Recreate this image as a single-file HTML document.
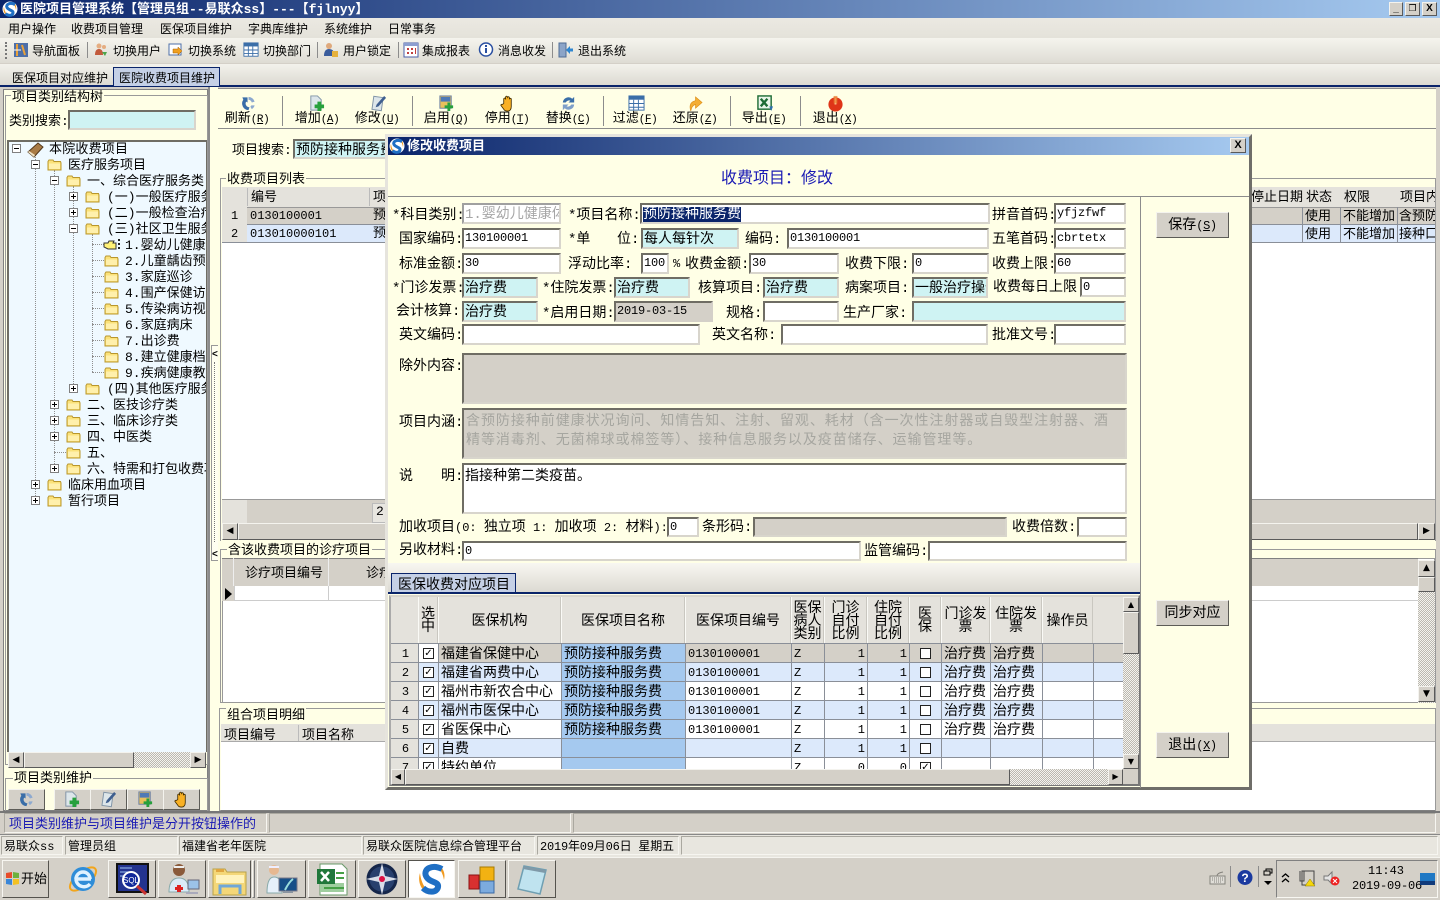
<!DOCTYPE html>
<html lang="zh"><head><meta charset="utf-8"><title>医院项目管理系统</title>
<style>
html,body{margin:0;padding:0;width:1440px;height:900px;overflow:hidden;background:#d4d0c8}
body{font-family:"Liberation Mono","WenQuanYi Zen Hei","Noto Sans CJK SC",monospace;font-size:12px;color:#000;position:relative}
div,span,i,svg{position:absolute;box-sizing:border-box}
b{font-weight:normal}
.a{white-space:nowrap;line-height:16px;margin-top:2px}
.a.m{margin-top:3px}
.tr .a{margin-top:4px}
.a b{font-size:12px}
.b{background:#ffffe6}
.m{font-size:14px}
.s13{font-size:13px}
.i{border:2px solid;border-color:#6f6d64 #d8d5cc #d8d5cc #6f6d64;background:#fff;white-space:nowrap;overflow:hidden;font-size:12px;line-height:17px;padding-left:1px;letter-spacing:-.2px}
.i.m{font-size:14px;line-height:20px;letter-spacing:0}
.c{background:#cff3f3;font-size:14px;line-height:20px;letter-spacing:0}
.g{background:#d4d0c8}
.gb{border:1px solid #999;background:transparent}
.btn{background:#d4d0c8;border:1px solid;border-color:#f4f3ee #5d5c57 #5d5c57 #f4f3ee;text-align:center;font-size:14px}
.btn b{font-size:12px;letter-spacing:-.4px}
.tb b{font-size:11px;letter-spacing:-.4px}
.sb{background:#d4d0c8;border:1px solid;border-color:#f4f3ee #5a5a5a #5a5a5a #f4f3ee}
.ht{background:repeating-conic-gradient(#bbb8b0 0 25%,#f4f3ee 0 50%) 0 0/2px 2px}
.l{background:#8c8c8c}
.tg{width:9px;height:9px;border:1px solid #808080;background:#fff}
.tg::before{content:"";position:absolute;left:1px;top:3px;width:5px;height:1px;background:#000}
.tg.p::after{content:"";position:absolute;left:3px;top:1px;width:1px;height:5px;background:#000}
.dv{border-left:1px dotted #8f8f8f}
.dh{border-top:1px dotted #8f8f8f;height:1px}
.tb{font-size:13px;text-align:center;white-space:nowrap;line-height:16px;width:60px;margin-top:3px}
table{position:absolute;border-collapse:collapse;table-layout:fixed;font-size:14px}
td{border:1px solid #8a8f98;height:19px;padding:4px 0 0 2px;white-space:nowrap;overflow:hidden;line-height:14px;box-sizing:border-box}
td.mo{font-size:12px;padding-top:2px;line-height:15px}
td.r{text-align:right;padding-right:2px;font-size:12px;padding-top:2px;line-height:15px}
td.n{background:#e4e2dc;text-align:center;font-size:12px;padding-top:2px;line-height:15px}
td.nm{background:#a5c9ef}
.rb td{background:#dce9fb}.rb td.n{background:#e4e2dc}.rb td.nm{background:#a5c9ef}
.rg td{background:#d4d0c8}.rg td.n{background:#e4e2dc}.rg td.nm{background:#a5c9ef}.rg td.ck{background:#fff}
td.cc{padding:0}
.cb{position:static;display:block;margin:1px auto 0;width:11px;height:11px;border:1px solid #222;background:#fff;font:bold 10px/9px "DejaVu Sans";text-align:center;overflow:hidden}
.h{background:#e4e2dc;border-right:1px solid #c9c7c0;border-left:1px solid #fafaf6;text-align:center;height:46px;top:597px;line-height:13px;font-size:14px;display:flex;align-items:center;justify-content:center;padding-top:4px}
.st{border:1px solid;border-color:#aaa8a0 #f6f5f0 #f6f5f0 #aaa8a0;height:19px;top:836px;line-height:21px;padding-left:2px;white-space:nowrap;overflow:hidden}
.tk{top:860px;height:38px;background:#d4d0c8;border:1px solid;border-color:#f7f6f1 #55534e #55534e #f7f6f1}
</style></head><body>
<svg width="0" height="0" style="left:0;top:0"><defs>
<symbol id="fo" viewBox="0 0 15 13"><path d="M1 3.500 2 2h4l1 1.500h6.500L14 5v7H1z" fill="#fbe27a" stroke="#b8962d"/><path d="M2 5.500h11v5.500H2z" fill="#fff0ac"/></symbol>
<symbol id="rf" viewBox="0 0 18 18"><path d="M9 2A7 7 0 0 1 15.500 7l-3 1A4 4 0 0 0 9 5z" fill="#8da9cf"/><path d="M3.500 5A7 7 0 0 0 9 16l1-3a4 4 0 0 1-3.500-6L8 8V2.500H2.500z" fill="#3a6ea8"/><path d="M15.500 11a7 7 0 0 1-3 4l-1.500-2.500 1-1.500z" fill="#8da9cf"/></symbol>
<symbol id="ad" viewBox="0 0 18 18"><path d="M3 1h7l4 4v11H3z" fill="#dde6ea" stroke="#7f93a6"/><path d="M10 7h4v3h3v4h-3v3h-4v-3H7v-4h3z" fill="#27a03c"/></symbol>
<symbol id="ed" viewBox="0 0 18 18"><path d="M3 2h10v14H3z" fill="#dde6ea" stroke="#7f93a6" transform="rotate(8 8 9)"/><path d="M15 1l2 2-8 9-3 1 1-3z" fill="#3f5f8f"/></symbol>
<symbol id="en" viewBox="0 0 18 18"><rect x="2" y="1" width="12" height="13" fill="#e8c05c" stroke="#6b7ea0"/><rect x="3" y="2" width="10" height="5" fill="#4f79b5"/><path d="M10 8h3v3h3v3h-3v3h-3v-3H7v-3h3z" fill="#27a03c"/></symbol>
<symbol id="hd" viewBox="0 0 18 18"><path d="M5 9V4q1-1.500 2 0V2q1-1.500 2 0v.500q1-1.500 2 0V4q1-1 2 0v8q0 5-4 5-3 0-4-2L2 11q0-1.500 1.500-1z" fill="#f8b024" stroke="#402c00" stroke-width=".9"/></symbol>
<symbol id="sw" viewBox="0 0 18 18"><path d="M3 8A6 6 0 0 1 13 4l2-2v6H9l2-2A4 4 0 0 0 6 8z" fill="#3a6ea8"/><path d="M15 10A6 6 0 0 1 5 14l-2 2v-6h6l-2 2a4 4 0 0 0 5-2z" fill="#7e9fc9"/></symbol>
<symbol id="fl" viewBox="0 0 18 18"><rect x="1" y="1" width="16" height="15" fill="#fff" stroke="#3b6ea8"/><path d="M1 1h16v4H1z" fill="#3b6ea8"/><path d="M6 5v11M11 5v11M1 9h16M1 13h16" stroke="#3b6ea8"/></symbol>
<symbol id="un" viewBox="0 0 18 18"><path d="M4 17Q1 8 9 6V2l7 6-7 6v-4q-4 1-5 7z" fill="#f4ae33" stroke="#d98a12" stroke-width=".6"/></symbol>
<symbol id="xl" viewBox="0 0 18 18"><rect x="1" y="1" width="14" height="14" fill="#eaf5ea" stroke="#1d6b35" stroke-width="1.500"/><path d="M4 4l7 8M11 4l-7 8" stroke="#1d6b35" stroke-width="2.500"/><path d="M13 12h4l-2 5z" fill="#2d6fb0"/></symbol>
<symbol id="pw" viewBox="0 0 18 18"><circle cx="9" cy="10" r="7.500" fill="#df3518"/><path d="M9 3v7" stroke="#ffd4a0" stroke-width="2"/><rect x="7" y="1" width="4" height="8" fill="#e8792a" opacity=".7"/></symbol>
<symbol id="lg" viewBox="0 0 16 16"><circle cx="8" cy="8" r="7.500" fill="#fff"/><path d="M2 6C.5 10 3 15 8 15 5 14 2.500 11 2 6z" fill="#f19a1f"/><path d="M10 1c3 1 5 4 4 8-.5-3-2-6-4-8z" fill="#f19a1f"/><path d="M13 3.500C8 1 3.500 3.500 5 6.500S11.500 9 11 12 6 15 3.500 12.500" fill="none" stroke="#1f6fc4" stroke-width="3"/></symbol>
</defs></svg>

<!-- window title -->
<div style="left:0;top:0;width:1440px;height:18px;background:linear-gradient(90deg,#0a246a,#a6caf0)"></div>
<svg style="left:2px;top:1px" width="16" height="16"><use href="#lg"/></svg>
<div class="a" style="left:20px;top:-1px;margin-top:2px;color:#fff;font-weight:bold;font-size:13px;line-height:18px;padding-top:0">医院项目管理系统【管理员组--易联众ss】---【fjlnyy】</div>
<div class="sb" style="left:1389px;top:2px;width:14px;height:14px;font:bold 10px/12px 'Liberation Sans';text-align:center">_</div>
<div class="sb" style="left:1405px;top:2px;width:15px;height:14px;font:bold 9px/12px 'DejaVu Sans';text-align:center">&#10064;</div>
<div class="sb" style="left:1422px;top:2px;width:15px;height:14px;font:bold 10px/12px 'Liberation Sans';text-align:center">X</div>

<!-- menu -->
<div style="left:0;top:18px;width:1440px;height:20px;background:linear-gradient(#ebe9e2,#e4e2da)"></div>
<div class="a" style="left:8px;top:20px">用户操作</div>
<div class="a" style="left:71px;top:20px">收费项目管理</div>
<div class="a" style="left:160px;top:20px">医保项目维护</div>
<div class="a" style="left:248px;top:20px">字典库维护</div>
<div class="a" style="left:324px;top:20px">系统维护</div>
<div class="a" style="left:388px;top:20px">日常事务</div>

<!-- toolbar -->
<div style="left:0;top:38px;width:1440px;height:25px;background:linear-gradient(#f5f4ee,#dedcd4)"></div>
<div style="left:5px;top:42px;width:2px;height:17px;border-left:2px dotted #777"></div>
<svg style="left:13px;top:42px" width="16" height="16"><rect x="1" y="1" width="14" height="14" fill="#4d6fa8"/><path d="M4 2v12M9 3l3 10" stroke="#e9a13b" stroke-width="2"/><path d="M1 8h7" stroke="#fff"/></svg>
<div class="a" style="left:32px;top:42px">导航面板</div>
<div class="l" style="left:87px;top:42px;width:1px;height:16px"></div>
<svg style="left:93px;top:42px" width="16" height="16"><circle cx="6" cy="4" r="2.500" fill="#e5ad81"/><path d="M2 13q0-6 4-6t4 6z" fill="#c25a3c"/><circle cx="11" cy="5" r="2" fill="#e5ad81"/><path d="M9 10h5l-2 4z" fill="#4ca64c"/></svg>
<div class="a" style="left:113px;top:42px">切换用户</div>
<svg style="left:168px;top:42px" width="16" height="16"><rect x="1" y="2" width="12" height="11" fill="#fff" stroke="#4d6fa8"/><path d="M5 7h5v-2l4 4-4 4v-2H5z" fill="#f0a020" stroke="#a85f00" stroke-width=".5"/></svg>
<div class="a" style="left:188px;top:42px">切换系统</div>
<svg style="left:243px;top:42px" width="16" height="16"><use href="#fl"/></svg>
<div class="a" style="left:263px;top:42px">切换部门</div>
<div class="l" style="left:317px;top:42px;width:1px;height:16px"></div>
<svg style="left:323px;top:42px" width="16" height="16"><circle cx="6" cy="4" r="3" fill="#dfa97c"/><path d="M1 14q0-7 5-7t5 5v2z" fill="#3a5c9c"/><rect x="9" y="9" width="6" height="6" fill="#e6b13c"/></svg>
<div class="a" style="left:343px;top:42px">用户锁定</div>
<div class="l" style="left:398px;top:42px;width:1px;height:16px"></div>
<svg style="left:403px;top:42px" width="16" height="16"><rect x="1" y="1" width="14" height="14" fill="#fff" stroke="#4a5fa8"/><path d="M1 1h14v3H1z" fill="#8c9ed0"/><path d="M4 6h2v2H4zM8 6h2v2H8zM4 10h2v2H4zM8 10h2v2H8zM12 6h1v6h-1z" fill="#c04040"/></svg>
<div class="a" style="left:422px;top:42px">集成报表</div>
<svg style="left:478px;top:42px" width="16" height="17"><circle cx="8" cy="7.500" r="6.500" fill="#fff" stroke="#2a4fa0" stroke-width="1.500"/><path d="M7 3h2v2H7zM7 6h2v5H7z" fill="#2a4fa0"/></svg>
<div class="a" style="left:498px;top:42px">消息收发</div>
<div class="l" style="left:552px;top:42px;width:1px;height:16px"></div>
<svg style="left:558px;top:42px" width="16" height="16"><rect x="1" y="1" width="7" height="14" fill="#8ba4c8" stroke="#4f6c95"/><path d="M8 8l4-4v2.500h3v3h-3V12z" fill="#2e86d0"/></svg>
<div class="a" style="left:578px;top:42px">退出系统</div>

<!-- tabs -->
<div style="left:0;top:64px;width:1440px;height:21px;background:linear-gradient(#f3f2ec,#dcdad2)"></div>
<div style="left:0;top:85px;width:1440px;height:2px;background:#0a246a"></div>
<div class="a" style="left:12px;top:69px">医保项目对应维护</div>
<div style="left:113px;top:67px;width:107px;height:19px;background:#c5d0e6;border:1px solid #0a246a;border-bottom:none"></div>
<div class="a" style="left:119px;top:69px">医院收费项目维护</div>

<!-- left panel -->
<div style="left:0;top:87px;width:5px;height:727px;background:#d4d0c8"></div>
<div class="b" style="left:3px;top:89px;width:205px;height:722px;border:1px solid #808080"></div>
<div class="gb" style="left:5px;top:95px;width:203px;height:670px"></div>
<div class="a b s13" style="left:11px;top:88px;padding:0 1px">项目类别结构树</div>
<div class="a s13" style="left:9px;top:112px">类别搜索:</div>
<div class="i c" style="left:68px;top:110px;width:128px;height:20px"></div>
<div class="tr" style="left:7px;top:140px;width:200px;height:612px;background:#eff9ff;border:1px solid #6f6d64;border-width:2px 1px 0 2px;overflow:hidden">
<div style="left:-9px;top:-142px;width:1440px;height:900px;font-size:13px">
<div class="dv" style="left:35px;top:152px;height:348px"></div>
<div class="dv" style="left:54px;top:170px;height:300px"></div>
<div class="dv" style="left:73px;top:186px;height:204px"></div>
<div class="dv" style="left:92px;top:234px;height:138px"></div>
<i class="tg" style="left:12px;top:144px"></i><svg style="left:27px;top:141px" width="18" height="17" viewBox="0 0 18 17"><path d="M1 11 11 2l5 4-9 10z" fill="#a97b45" stroke="#53391c"/><path d="M1 11l6 5 1-2-6-4z" fill="#efe3c7"/></svg><div class="a" style="left:49px;top:138px;letter-spacing:.2px">本院收费项目</div>
<i class="tg" style="left:31px;top:160px"></i><svg style="left:47px;top:158px" width="15" height="13"><use href="#fo"/></svg><div class="a" style="left:68px;top:154px">医疗服务项目</div>
<i class="tg" style="left:50px;top:176px"></i><svg style="left:66px;top:174px" width="15" height="13"><use href="#fo"/></svg><div class="a" style="left:87px;top:170px">一、综合医疗服务类</div>
<i class="tg p" style="left:69px;top:192px"></i><svg style="left:85px;top:190px" width="15" height="13"><use href="#fo"/></svg><div class="a" style="left:107px;top:186px">(一)一般医疗服务项目</div>
<i class="tg p" style="left:69px;top:208px"></i><svg style="left:85px;top:206px" width="15" height="13"><use href="#fo"/></svg><div class="a" style="left:107px;top:202px">(二)一般检查治疗项目</div>
<i class="tg" style="left:69px;top:224px"></i><svg style="left:85px;top:222px" width="15" height="13"><use href="#fo"/></svg><div class="a" style="left:107px;top:218px">(三)社区卫生服务项目</div>
<div class="dh" style="left:92px;top:244px;width:12px"></div><svg style="left:103px;top:238px" width="17" height="14"><path d="M1 5h4l1-2h5l-1 2h3v6H5L1 9z" fill="#fff176" stroke="#333"/><path d="M15 1h2v2h-2zM15 5h2v2h-2zM15 9h2v2h-2z" fill="#222"/></svg><div class="a" style="left:125px;top:234px">1.婴幼儿健康体检</div>
<div class="dh" style="left:92px;top:260px;width:12px"></div><svg style="left:104px;top:254px" width="15" height="13"><use href="#fo"/></svg><div class="a" style="left:125px;top:250px">2.儿童龋齿预防</div>
<div class="dh" style="left:92px;top:276px;width:12px"></div><svg style="left:104px;top:270px" width="15" height="13"><use href="#fo"/></svg><div class="a" style="left:125px;top:266px">3.家庭巡诊</div>
<div class="dh" style="left:92px;top:292px;width:12px"></div><svg style="left:104px;top:286px" width="15" height="13"><use href="#fo"/></svg><div class="a" style="left:125px;top:282px">4.围产保健访视</div>
<div class="dh" style="left:92px;top:308px;width:12px"></div><svg style="left:104px;top:302px" width="15" height="13"><use href="#fo"/></svg><div class="a" style="left:125px;top:298px">5.传染病访视</div>
<div class="dh" style="left:92px;top:324px;width:12px"></div><svg style="left:104px;top:318px" width="15" height="13"><use href="#fo"/></svg><div class="a" style="left:125px;top:314px">6.家庭病床</div>
<div class="dh" style="left:92px;top:340px;width:12px"></div><svg style="left:104px;top:334px" width="15" height="13"><use href="#fo"/></svg><div class="a" style="left:125px;top:330px">7.出诊费</div>
<div class="dh" style="left:92px;top:356px;width:12px"></div><svg style="left:104px;top:350px" width="15" height="13"><use href="#fo"/></svg><div class="a" style="left:125px;top:346px">8.建立健康档案</div>
<div class="dh" style="left:92px;top:372px;width:12px"></div><svg style="left:104px;top:366px" width="15" height="13"><use href="#fo"/></svg><div class="a" style="left:125px;top:362px">9.疾病健康教育</div>
<i class="tg p" style="left:69px;top:384px"></i><svg style="left:85px;top:382px" width="15" height="13"><use href="#fo"/></svg><div class="a" style="left:107px;top:378px">(四)其他医疗服务项目</div>
<i class="tg p" style="left:50px;top:400px"></i><svg style="left:66px;top:398px" width="15" height="13"><use href="#fo"/></svg><div class="a" style="left:87px;top:394px">二、医技诊疗类</div>
<i class="tg p" style="left:50px;top:416px"></i><svg style="left:66px;top:414px" width="15" height="13"><use href="#fo"/></svg><div class="a" style="left:87px;top:410px">三、临床诊疗类</div>
<i class="tg p" style="left:50px;top:432px"></i><svg style="left:66px;top:430px" width="15" height="13"><use href="#fo"/></svg><div class="a" style="left:87px;top:426px">四、中医类</div>
<div class="dh" style="left:54px;top:452px;width:12px"></div><svg style="left:66px;top:446px" width="15" height="13"><use href="#fo"/></svg><div class="a" style="left:87px;top:442px">五、</div>
<i class="tg p" style="left:50px;top:464px"></i><svg style="left:66px;top:462px" width="15" height="13"><use href="#fo"/></svg><div class="a" style="left:87px;top:458px">六、特需和打包收费项目</div>
<i class="tg p" style="left:31px;top:480px"></i><svg style="left:47px;top:478px" width="15" height="13"><use href="#fo"/></svg><div class="a" style="left:68px;top:474px">临床用血项目</div>
<i class="tg p" style="left:31px;top:496px"></i><svg style="left:47px;top:494px" width="15" height="13"><use href="#fo"/></svg><div class="a" style="left:68px;top:490px">暂行项目</div>
</div></div>
<div class="ht" style="left:8px;top:752px;width:198px;height:16px"></div>
<div class="sb" style="left:8px;top:752px;width:16px;height:16px;font:9px/14px 'DejaVu Sans';text-align:center">&#9664;</div>
<div class="sb" style="left:24px;top:752px;width:110px;height:16px"></div>
<div class="sb" style="left:190px;top:752px;width:16px;height:16px;font:9px/14px 'DejaVu Sans';text-align:center">&#9654;</div>
<div class="gb" style="left:5px;top:778px;width:203px;height:34px;border-bottom:none"></div>
<div class="a b s13" style="left:13px;top:769px;padding:0 1px">项目类别维护</div>
<div class="btn" style="left:8px;top:789px;width:37px;height:21px"></div><svg style="left:18px;top:791px" width="17" height="17"><use href="#rf"/></svg>
<div class="btn" style="left:54px;top:789px;width:37px;height:21px"></div><svg style="left:63px;top:791px" width="17" height="17"><use href="#ad"/></svg>
<div class="btn" style="left:90px;top:789px;width:37px;height:21px"></div><svg style="left:100px;top:791px" width="17" height="17"><use href="#ed"/></svg>
<div class="btn" style="left:127px;top:789px;width:37px;height:21px"></div><svg style="left:137px;top:791px" width="17" height="17"><use href="#en"/></svg>
<div class="btn" style="left:163px;top:789px;width:37px;height:21px"></div><svg style="left:173px;top:791px" width="17" height="17"><use href="#hd"/></svg>

<!-- splitter -->
<div style="left:208px;top:87px;width:2px;height:727px;background:#8c8c8c"></div>
<div class="b" style="left:210px;top:87px;width:8px;height:727px"></div>
<div style="left:211px;top:345px;width:8px;height:216px;border:1px solid #999;background:#fffff0"></div>
<div style="left:214px;top:362px;width:1px;height:180px;border-left:1px dotted #777"></div>
<div class="a" style="left:212px;top:347px;font:bold 10px/12px 'Liberation Sans'">&lt;</div>
<div class="a" style="left:212px;top:547px;font:bold 10px/12px 'Liberation Sans'">&lt;</div>

<!-- right panel bg -->
<div class="b" style="left:218px;top:89px;width:1218px;height:724px"></div>
<div style="left:1436px;top:87px;width:4px;height:727px;background:#d4d0c8"></div>
<div class="l" style="left:218px;top:88px;width:1218px;height:1px"></div>
<div class="l" style="left:218px;top:128px;width:1218px;height:1px"></div>

<!-- action toolbar -->
<svg style="left:240px;top:95px" width="17" height="17"><use href="#rf"/></svg><div class="tb" style="left:217px;top:108px">刷新<b>(<u>R</u>)</b></div>
<div class="l" style="left:282px;top:96px;width:1px;height:30px"></div>
<svg style="left:308px;top:95px" width="17" height="17"><use href="#ad"/></svg><div class="tb" style="left:287px;top:108px">增加<b>(<u>A</u>)</b></div>
<svg style="left:370px;top:95px" width="17" height="17"><use href="#ed"/></svg><div class="tb" style="left:347px;top:108px">修改<b>(<u>U</u>)</b></div>
<div class="l" style="left:412px;top:96px;width:1px;height:30px"></div>
<svg style="left:438px;top:95px" width="17" height="17"><use href="#en"/></svg><div class="tb" style="left:416px;top:108px">启用<b>(<u>Q</u>)</b></div>
<svg style="left:499px;top:95px" width="17" height="17"><use href="#hd"/></svg><div class="tb" style="left:477px;top:108px">停用<b>(<u>T</u>)</b></div>
<svg style="left:560px;top:95px" width="17" height="17"><use href="#sw"/></svg><div class="tb" style="left:538px;top:108px">替换<b>(<u>C</u>)</b></div>
<div class="l" style="left:603px;top:96px;width:1px;height:30px"></div>
<svg style="left:628px;top:95px" width="17" height="17"><use href="#fl"/></svg><div class="tb" style="left:605px;top:108px">过滤<b>(<u>F</u>)</b></div>
<svg style="left:687px;top:95px" width="17" height="17"><use href="#un"/></svg><div class="tb" style="left:665px;top:108px">还原<b>(<u>Z</u>)</b></div>
<div class="l" style="left:730px;top:96px;width:1px;height:30px"></div>
<svg style="left:757px;top:95px" width="17" height="17"><use href="#xl"/></svg><div class="tb" style="left:734px;top:108px">导出<b>(<u>E</u>)</b></div>
<div class="l" style="left:800px;top:96px;width:1px;height:30px"></div>
<svg style="left:827px;top:95px" width="17" height="17"><use href="#pw"/></svg><div class="tb" style="left:805px;top:108px">退出<b>(<u>X</u>)</b></div>

<div class="a s13" style="left:232px;top:141px">项目搜索:</div>
<div class="i c" style="left:293px;top:139px;width:100px;height:20px">预防接种服务费</div>

<!-- 收费项目列表 -->
<div class="gb" style="left:220px;top:178px;width:1216px;height:363px;border-bottom:none"></div>
<div class="a b s13" style="left:226px;top:170px;padding:0 1px">收费项目列表</div>
<div style="left:222px;top:187px;width:1213px;height:353px;background:#fff"></div>
<div style="left:222px;top:187px;width:1213px;height:20px;background:#e4e2dc"></div>
<div class="a s13" style="left:251px;top:188px">编号</div><div class="a s13" style="left:373px;top:188px">项</div>
<div style="left:247px;top:188px;width:1px;height:18px;background:#bbb"></div>
<div style="left:369px;top:188px;width:1px;height:18px;background:#bbb"></div>
<div style="left:222px;top:207px;width:1213px;height:18px;background:#d4d0c8;border-bottom:1px solid #8a8f98;border-top:1px solid #999"></div>
<div style="left:222px;top:225px;width:1213px;height:18px;background:#dce9fb;border-bottom:1px solid #8a8f98"></div>
<div style="left:222px;top:207px;width:25px;height:36px;background:#e4e2dc;border-bottom:1px solid #8a8f98"></div>
<div class="a" style="left:231px;top:206px">1</div><div class="a" style="left:231px;top:224px">2</div>
<div class="a" style="left:250px;top:206px">0130100001</div><div class="a" style="left:250px;top:224px">013010000101</div>
<div class="a s13" style="left:373px;top:206px">预</div><div class="a s13" style="left:373px;top:224px">预</div>
<div class="a s13" style="left:1251px;top:188px">停止日期</div><div class="a s13" style="left:1306px;top:188px">状态</div><div class="a s13" style="left:1344px;top:188px">权限</div><div class="a s13" style="left:1400px;top:188px;width:35px;overflow:hidden">项目内容</div>
<div class="a s13" style="left:1305px;top:207px">使用</div><div class="a s13" style="left:1343px;top:207px">不能增加</div><div class="a s13" style="left:1399px;top:207px;width:36px;overflow:hidden">含预防接种</div>
<div class="a s13" style="left:1305px;top:225px">使用</div><div class="a s13" style="left:1343px;top:225px">不能增加</div><div class="a s13" style="left:1399px;top:225px;width:36px;overflow:hidden">接种口服</div>
<div style="left:1302px;top:207px;width:1px;height:36px;background:#8a8f98"></div><div style="left:1340px;top:207px;width:1px;height:36px;background:#8a8f98"></div><div style="left:1397px;top:207px;width:1px;height:36px;background:#8a8f98"></div>
<div style="left:222px;top:499px;width:1213px;height:24px;background:#d4d0c8;border-top:1px solid #999"></div>
<div style="left:222px;top:500px;width:25px;height:23px;background:#e4e2dc"></div>
<div class="a" style="left:372px;top:501px;width:15px;height:20px;background:#e8e6e0;border:1px solid #bbb;font-size:13px;padding-left:3px">2</div>
<div class="ht" style="left:222px;top:523px;width:1213px;height:17px"></div>
<div class="sb" style="left:222px;top:523px;width:16px;height:17px;font:9px/15px 'DejaVu Sans';text-align:center">&#9664;</div>
<div class="sb" style="left:238px;top:523px;width:1180px;height:17px"></div>
<div class="sb" style="left:1418px;top:523px;width:17px;height:17px;font:9px/15px 'DejaVu Sans';text-align:center">&#9654;</div>

<!-- 诊疗项目 -->
<div class="gb" style="left:220px;top:549px;width:1216px;height:154px"></div>
<div class="a b s13" style="left:227px;top:541px;padding:0 1px">含该收费项目的诊疗项目</div>
<div style="left:222px;top:558px;width:1213px;height:145px;background:#fff;border:1px solid #999"></div>
<div style="left:222px;top:558px;width:1196px;height:28px;background:#d4d0c8;border-top:1px solid #808080"></div>
<div style="left:233px;top:558px;width:1px;height:28px;background:#eee"></div>
<div style="left:328px;top:558px;width:1px;height:28px;background:#eee"></div>
<div class="a s13" style="left:245px;top:564px">诊疗项目编号</div><div class="a s13" style="left:366px;top:564px">诊疗</div>
<div style="left:222px;top:586px;width:12px;height:15px;background:#d4d0c8"></div>
<svg style="left:225px;top:588px" width="8" height="12"><path d="M0 0l7 6-7 6z" fill="#000"/></svg>
<div style="left:234px;top:586px;width:95px;height:15px;border:1px solid #ccc;border-top:none"></div>
<div style="left:234px;top:600px;width:1184px;height:1px;background:#ccc"></div>
<div class="ht" style="left:1418px;top:560px;width:17px;height:143px"></div>
<div class="sb" style="left:1418px;top:560px;width:17px;height:17px;font:9px/14px 'DejaVu Sans';text-align:center">&#9650;</div>
<div class="sb" style="left:1418px;top:577px;width:17px;height:15px"></div>
<div class="sb" style="left:1418px;top:686px;width:17px;height:16px;font:9px/14px 'DejaVu Sans';text-align:center">&#9660;</div>
<div class="gb" style="left:219px;top:708px;width:1217px;height:103px"></div>

<!-- 组合项目明细 -->
<div class="a b s13" style="left:226px;top:706px;padding:0 1px">组合项目明细</div>
<div style="left:221px;top:724px;width:1214px;height:87px;background:#fff;border-bottom:1px solid #808080"></div>
<div style="left:221px;top:724px;width:1214px;height:18px;background:#e4e2dc;border-bottom:1px solid #aaa"></div>
<div class="a s13" style="left:224px;top:726px">项目编号</div><div class="a s13" style="left:302px;top:726px">项目名称</div>
<div style="left:298px;top:725px;width:1px;height:16px;background:#bbb"></div>

<!-- modal -->
<div class="b" style="left:385px;top:134px;width:867px;height:656px;border:3px solid;border-color:#e6e4dd #6f6e69 #6f6e69 #e6e4dd"></div>
<div style="left:388px;top:137px;width:861px;height:18px;background:linear-gradient(90deg,#0a246a,#a6caf0)"></div>
<svg style="left:389px;top:138px" width="16" height="16"><use href="#lg"/></svg>
<div class="a" style="left:407px;top:136px;color:#fff;font-weight:bold;font-size:13px;line-height:18px">修改收费项目</div>
<div class="sb" style="left:1230px;top:138px;width:16px;height:15px;font:bold 11px/13px 'Liberation Sans';text-align:center">X</div>
<div class="a" style="left:721px;top:168px;font-size:16px;line-height:18px;color:#1a1ab4">收费项目：修改</div>
<div class="l" style="left:388px;top:196px;width:861px;height:1px"></div>
<div class="l" style="left:1140px;top:196px;width:1px;height:592px"></div>

<div class="a m" style="left:392px;top:205px">*科目类别:</div><div class="i m" style="left:462px;top:203px;width:99px;height:21px;border-color:#a0a0a0 #d8d5cc #d8d5cc #a0a0a0;color:#a6a6a6">1.婴幼儿健康体检</div>
<div class="a m" style="left:568px;top:205px">*项目名称:</div><div class="i m" style="left:640px;top:203px;width:350px;height:21px"><span style="position:static;background:#0a246a;color:#fff">预防接种服务费</span></div>
<div class="a m" style="left:992px;top:205px">拼音首码:</div><div class="i" style="left:1054px;top:203px;width:72px;height:21px">yfjzfwf</div>

<div class="a m" style="left:399px;top:229px">国家编码:</div><div class="i" style="left:462px;top:228px;width:99px;height:21px">130100001</div>
<div class="a m" style="left:568px;top:229px">*单</div><div class="a m" style="left:617px;top:229px">位:</div><div class="i c" style="left:641px;top:228px;width:98px;height:21px">每人每针次</div>
<div class="a m" style="left:745px;top:229px">编码:</div><div class="i" style="left:787px;top:228px;width:202px;height:21px">0130100001</div>
<div class="a m" style="left:992px;top:229px">五笔首码:</div><div class="i" style="left:1054px;top:228px;width:72px;height:21px">cbrtetx</div>

<div class="a m" style="left:399px;top:254px">标准金额:</div><div class="i" style="left:462px;top:253px;width:99px;height:21px">30</div>
<div class="a m" style="left:568px;top:254px">浮动比率:</div><div class="i" style="left:641px;top:253px;width:28px;height:21px">100</div><div class="a" style="left:673px;top:254px">%</div>
<div class="a m" style="left:685px;top:254px">收费金额:</div><div class="i" style="left:749px;top:253px;width:90px;height:21px">30</div>
<div class="a m" style="left:845px;top:254px">收费下限:</div><div class="i" style="left:912px;top:253px;width:77px;height:21px">0</div>
<div class="a m" style="left:992px;top:254px">收费上限:</div><div class="i" style="left:1054px;top:253px;width:72px;height:21px">60</div>

<div class="a m" style="left:392px;top:278px">*门诊发票:</div><div class="i c" style="left:462px;top:277px;width:76px;height:21px">治疗费</div>
<div class="a m" style="left:542px;top:278px">*住院发票:</div><div class="i c" style="left:614px;top:277px;width:76px;height:21px">治疗费</div>
<div class="a m" style="left:698px;top:278px">核算项目:</div><div class="i c" style="left:763px;top:277px;width:76px;height:21px">治疗费</div>
<div class="a m" style="left:845px;top:278px">病案项目:</div><div class="i c" style="left:912px;top:277px;width:76px;height:21px">一般治疗操作</div>
<div class="a m" style="left:993px;top:277px">收费每日上限</div><div class="i" style="left:1080px;top:277px;width:46px;height:20px">0</div>

<div class="a m" style="left:396px;top:301px">会计核算:</div><div class="i c" style="left:462px;top:301px;width:76px;height:21px">治疗费</div>
<div class="a m" style="left:542px;top:303px">*启用日期:</div><div class="i g" style="left:614px;top:301px;width:99px;height:21px;border-color:#6f6d64 #d4d0c8 #d4d0c8 #6f6d64">2019-03-15</div>
<div class="a m" style="left:726px;top:303px">规格:</div><div class="i" style="left:763px;top:301px;width:76px;height:21px"></div>
<div class="a m" style="left:843px;top:303px">生产厂家:</div><div class="i c" style="left:912px;top:301px;width:214px;height:21px"></div>

<div class="a m" style="left:399px;top:325px">英文编码:</div><div class="i" style="left:462px;top:324px;width:238px;height:21px"></div>
<div class="a m" style="left:712px;top:325px">英文名称:</div><div class="i" style="left:781px;top:324px;width:207px;height:21px"></div>
<div class="a m" style="left:992px;top:325px">批准文号:</div><div class="i" style="left:1054px;top:324px;width:72px;height:21px"></div>

<div class="a m" style="left:399px;top:356px">除外内容:</div><div class="i g" style="left:462px;top:353px;width:665px;height:51px"></div>
<div class="a m" style="left:399px;top:412px">项目内涵:</div>
<div class="i g m" style="left:462px;top:408px;width:665px;height:51px;color:#a6a6a0;line-height:19px;padding-top:3px;padding-left:2px;letter-spacing:.95px">含预防接种前健康状况询问、知情告知、注射、留观、耗材（含一次性注射器或自毁型注射器、酒<br>精等消毒剂、无菌棉球或棉签等）、接种信息服务以及疫苗储存、运输管理等。</div>
<div class="a m" style="left:399px;top:466px">说</div><div class="a m" style="left:441px;top:466px">明:</div>
<div class="i m" style="left:462px;top:463px;width:665px;height:51px;line-height:20px;padding-top:2px">指接种第二类疫苗。</div>

<div class="a m" style="left:399px;top:517px">加收项目<b>(0: </b>独立项<b> 1: </b>加收项<b> 2: </b>材料<b>):</b></div><div class="i" style="left:667px;top:517px;width:32px;height:20px">0</div>
<div class="a m" style="left:702px;top:517px">条形码:</div><div class="i g" style="left:753px;top:517px;width:254px;height:20px"></div>
<div class="a m" style="left:1012px;top:517px">收费倍数:</div><div class="i" style="left:1077px;top:517px;width:50px;height:20px"></div>
<div class="a m" style="left:399px;top:540px">另收材料:</div><div class="i" style="left:462px;top:541px;width:399px;height:20px">0</div>
<div class="a m" style="left:864px;top:541px">监管编码:</div><div class="i" style="left:928px;top:541px;width:199px;height:20px"></div>

<div style="left:388px;top:563px;width:752px;height:29px;background:linear-gradient(#f8f7f1,#dcdad2)"></div>
<div style="left:391px;top:573px;width:125px;height:20px;background:#c5d0e6;border:1px solid #0a246a;border-bottom:none"></div>
<div class="a m" style="left:398px;top:575px">医保收费对应项目</div>
<div style="left:388px;top:592px;width:752px;height:2px;background:#0a246a"></div>

<div style="left:389px;top:595px;width:751px;height:191px;background:#d4d0c8;border:2px solid;border-color:#d8d5cc #777 #777 #aaa"></div>
<div style="left:391px;top:597px;width:732px;height:47px;background:#e4e2dc"></div>
<div class="h" style="left:418px;width:20px">选<br>中</div>
<div class="h" style="left:438px;width:123px">医保机构</div>
<div class="h" style="left:561px;width:124px">医保项目名称</div>
<div class="h" style="left:685px;width:106px">医保项目编号</div>
<div class="h" style="left:791px;width:33px">医保<br>病人<br>类别</div>
<div class="h" style="left:824px;width:43px">门诊<br>自付<br>比例</div>
<div class="h" style="left:867px;width:42px">住院<br>自付<br>比例</div>
<div class="h" style="left:909px;width:32px">医<br>保</div>
<div class="h" style="left:941px;width:49px">门诊发<br>票</div>
<div class="h" style="left:990px;width:52px">住院发<br>票</div>
<div class="h" style="left:1042px;width:51px">操作员</div>
<div style="left:391px;top:643px;width:732px;height:126px;overflow:hidden;background:#fff">
<table style="left:-1px;top:0;width:733px">
<colgroup><col style="width:28px"><col style="width:20px"><col style="width:123px"><col style="width:124px"><col style="width:106px"><col style="width:33px"><col style="width:43px"><col style="width:42px"><col style="width:32px"><col style="width:49px"><col style="width:52px"><col style="width:51px"><col style="width:30px"></colgroup>
<tr class="rg"><td class="n">1</td><td class="ck cc"><span class="cb">&#10003;</span></td><td>福建省保健中心</td><td class="nm">预防接种服务费</td><td class="mo">0130100001</td><td class="mo">Z</td><td class="r">1</td><td class="r">1</td><td class="cc"><span class="cb"></span></td><td>治疗费</td><td>治疗费</td><td></td><td></td></tr>
<tr class="rb"><td class="n">2</td><td class="cc"><span class="cb">&#10003;</span></td><td>福建省两费中心</td><td class="nm">预防接种服务费</td><td class="mo">0130100001</td><td class="mo">Z</td><td class="r">1</td><td class="r">1</td><td class="cc"><span class="cb"></span></td><td>治疗费</td><td>治疗费</td><td></td><td></td></tr>
<tr><td class="n">3</td><td class="cc"><span class="cb">&#10003;</span></td><td>福州市新农合中心</td><td class="nm">预防接种服务费</td><td class="mo">0130100001</td><td class="mo">Z</td><td class="r">1</td><td class="r">1</td><td class="cc"><span class="cb"></span></td><td>治疗费</td><td>治疗费</td><td></td><td></td></tr>
<tr class="rb"><td class="n">4</td><td class="cc"><span class="cb">&#10003;</span></td><td>福州市医保中心</td><td class="nm">预防接种服务费</td><td class="mo">0130100001</td><td class="mo">Z</td><td class="r">1</td><td class="r">1</td><td class="cc"><span class="cb"></span></td><td>治疗费</td><td>治疗费</td><td></td><td></td></tr>
<tr><td class="n">5</td><td class="cc"><span class="cb">&#10003;</span></td><td>省医保中心</td><td class="nm">预防接种服务费</td><td class="mo">0130100001</td><td class="mo">Z</td><td class="r">1</td><td class="r">1</td><td class="cc"><span class="cb"></span></td><td>治疗费</td><td>治疗费</td><td></td><td></td></tr>
<tr class="rb"><td class="n">6</td><td class="cc"><span class="cb">&#10003;</span></td><td>自费</td><td class="nm"></td><td class="mo"></td><td class="mo">Z</td><td class="r">1</td><td class="r">1</td><td class="cc"><span class="cb"></span></td><td></td><td></td><td></td><td></td></tr>
<tr><td class="n">7</td><td class="cc"><span class="cb">&#10003;</span></td><td>特约单位</td><td class="nm"></td><td class="mo"></td><td class="mo">Z</td><td class="r">0</td><td class="r">0</td><td class="cc"><span class="cb">&#10003;</span></td><td></td><td></td><td></td><td></td></tr>
</table></div>
<div class="ht" style="left:1123px;top:597px;width:16px;height:172px"></div>
<div class="sb" style="left:1123px;top:597px;width:16px;height:15px;font:8px/13px 'DejaVu Sans';text-align:center">&#9650;</div>
<div class="sb" style="left:1123px;top:612px;width:16px;height:42px"></div>
<div class="sb" style="left:1123px;top:754px;width:16px;height:15px;font:8px/13px 'DejaVu Sans';text-align:center">&#9660;</div>
<div class="ht" style="left:391px;top:769px;width:732px;height:16px"></div>
<div class="sb" style="left:391px;top:769px;width:14px;height:16px;font:8px/14px 'DejaVu Sans';text-align:center">&#9664;</div>
<div class="sb" style="left:405px;top:769px;width:605px;height:16px"></div>
<div class="sb" style="left:1108px;top:769px;width:15px;height:16px;font:8px/14px 'DejaVu Sans';text-align:center">&#9654;</div>

<div class="btn" style="left:1156px;top:212px;width:73px;height:26px;line-height:27px">保存<b>(<u>S</u>)</b></div>
<div class="btn" style="left:1156px;top:600px;width:73px;height:26px;line-height:27px">同步对应</div>
<div class="btn" style="left:1156px;top:732px;width:73px;height:26px;line-height:27px">退出<b>(<u>X</u>)</b></div>

<!-- status -->
<div style="left:0;top:811px;width:1440px;height:2px;background:#777"></div>
<div style="left:4px;top:813px;width:263px;height:20px;border:1px solid;border-color:#aaa8a0 #f6f5f0 #f6f5f0 #aaa8a0;color:#1a1ab4;line-height:21px;padding-left:4px;font-size:13px;white-space:nowrap">项目类别维护与项目维护是分开按钮操作的</div>
<div style="left:269px;top:813px;width:302px;height:20px;border:1px solid;border-color:#aaa8a0 #f6f5f0 #f6f5f0 #aaa8a0"></div>
<div style="left:573px;top:813px;width:863px;height:20px;border:1px solid;border-color:#aaa8a0 #f6f5f0 #f6f5f0 #aaa8a0"></div>
<div style="left:0;top:834px;width:1440px;height:23px;background:#e8e6df"></div>
<div style="left:0;top:834px;width:1440px;height:1px;background:#888"></div>
<div class="st" style="left:1px;width:62px">易联众ss</div>
<div class="st" style="left:65px;width:113px">管理员组</div>
<div class="st" style="left:179px;width:183px">福建省老年医院</div>
<div class="st" style="left:363px;width:172px">易联众医院信息综合管理平台</div>
<div class="st" style="left:537px;width:142px;letter-spacing:-.2px">2019年09月06日 星期五</div>
<div class="st" style="left:681px;width:757px"></div>

<!-- taskbar -->
<div style="left:0;top:857px;width:1440px;height:43px;background:#d4d0c8;border-top:1px solid #f5f4ef"></div>
<div class="tk" style="left:2px;width:47px"></div>
<svg style="left:5px;top:871px" width="15" height="15"><path d="M1 2l6-1v6H1z" fill="#e74c2a"/><path d="M8 1l6 1v5H8z" fill="#6db13c"/><path d="M1 8h6v6l-6-1z" fill="#3a86d8"/><path d="M8 8h6v5l-6 1z" fill="#f3c123"/></svg>
<div class="a s13" style="left:21px;top:870px">开始</div>
<svg style="left:66px;top:861px" width="34" height="36" viewBox="0 0 34 36"><ellipse cx="17" cy="18" rx="16" ry="7" fill="none" stroke="#f2a51c" stroke-width="2" transform="rotate(-40 17 18)"/><circle cx="17" cy="18" r="12" fill="#2f8dd8"/><path d="M9 18h16M10 18a7 7 0 0 1 14 0M24 23a8 8 0 0 1-14-5" fill="none" stroke="#dff2ff" stroke-width="3.500"/></svg>
<div class="tk" style="left:108px;width:48px"></div>
<svg style="left:116px;top:863px" width="34" height="33" viewBox="0 0 34 33"><rect x="1" y="1" width="31" height="28" fill="#23338f" stroke="#111" stroke-width="2"/><path d="M4 5h12M4 9h12M4 13h12" stroke="#9ec3f0"/><circle cx="15" cy="17" r="8" fill="#11289a" stroke="#fff" stroke-width="2"/><text x="15" y="20" font-size="8" fill="#fff" text-anchor="middle" font-family="Liberation Sans">SQL</text><path d="M21 23l9 8" stroke="#c83232" stroke-width="3"/></svg>
<div class="tk" style="left:158px;width:48px"></div>
<svg style="left:166px;top:862px" width="34" height="34" viewBox="0 0 34 34"><circle cx="13" cy="8" r="6" fill="#8a5a3a"/><path d="M8 4h10v2H8z" fill="#eee"/><path d="M3 30q0-14 10-14t10 14z" fill="#dbeaf8" stroke="#8aa"/><path d="M11 23h4v2h2v3h-2v2h-4v-2H9v-3h2z" fill="#d22"/><rect x="22" y="18" width="11" height="9" fill="#9cc2e8" stroke="#667"/><path d="M20 30h12v2H20z" fill="#aab"/></svg>
<div class="tk" style="left:208px;width:43px"></div>
<svg style="left:212px;top:866px" width="36" height="30" viewBox="0 0 36 30"><path d="M1 3h12l2 3h19v23H1z" fill="#f4d778" stroke="#b9a24a"/><path d="M4 9h28v8H4z" fill="#fff3bd"/><path d="M8 28v-8h20v8" fill="none" stroke="#6fa7d8" stroke-width="3"/><path d="M4 3h8v3H4z" fill="#e0a640"/></svg>
<div style="left:252px;top:860px;width:3px;height:38px;border:1px solid;border-color:#f7f6f1 #777 #777 #f7f6f1"></div>
<div class="tk" style="left:257px;width:49px"></div>
<svg style="left:265px;top:863px" width="34" height="32" viewBox="0 0 34 32"><circle cx="9" cy="7" r="5" fill="#e6b891"/><path d="M4 3h10v2H4z" fill="#eef"/><path d="M2 30q0-16 7-16t8 10v6z" fill="#e6f0fa" stroke="#8aa"/><rect x="14" y="15" width="18" height="13" fill="#164f88" stroke="#778"/><path d="M20 27q4-8 8-11" stroke="#9dd" stroke-width="2"/><path d="M18 28h10v2H18z" fill="#8a94a0"/></svg>
<div class="tk" style="left:308px;width:48px"></div>
<svg style="left:316px;top:863px" width="33" height="33" viewBox="0 0 33 33"><path d="M4 1h22l5 5v26H4z" fill="#fff" stroke="#6a9a6a"/><rect x="4" y="20" width="24" height="9" fill="#9fce9f"/><rect x="1" y="6" width="18" height="15" fill="#20773a"/><path d="M5 9l8 9M13 9l-8 9" stroke="#fff" stroke-width="2.500"/><path d="M20 10h8M20 15h8M8 25h20" stroke="#46a046" stroke-width="2"/></svg>
<div class="tk" style="left:358px;width:48px"></div>
<svg style="left:365px;top:862px" width="34" height="34" viewBox="0 0 34 34"><circle cx="17" cy="17" r="14" fill="#28406e" stroke="#15264a" stroke-width="3"/><path d="M17 1l3 13 13 3-13 3-3 13-3-13-13-3 13-3z" fill="#d8dde8"/><circle cx="17" cy="17" r="3" fill="#d14"/></svg>
<div style="left:408px;top:860px;width:47px;height:38px;background:#fff;border:1px solid;border-color:#55534e #f7f6f1 #f7f6f1 #55534e"></div>
<svg style="left:416px;top:862px" width="32" height="34" viewBox="0 0 16 16"><path d="M2 5C.5 10 3 15 8 15.500 5 14 2.500 10 2 5z" fill="#f19a1f"/><path d="M10 .5c3 1 5 4 4 8-.5-3-2-6-4-8z" fill="#f19a1f"/><path d="M13 3C8 .5 3.500 3 5 6.500S11.500 9 11 12 6 15 3.500 12.500" fill="none" stroke="#1f6fc4" stroke-width="3"/></svg>
<div class="tk" style="left:458px;width:48px"></div>
<svg style="left:468px;top:866px" width="28" height="28" viewBox="0 0 28 28"><rect x="12" y="1" width="14" height="14" fill="#f2b212" stroke="#a87a00"/><rect x="12" y="15" width="14" height="12" fill="#7cabde" stroke="#3a6aa5"/><rect x="1" y="9" width="10" height="14" fill="#d83030" stroke="#8a1212"/></svg>
<div class="tk" style="left:508px;width:48px"></div>
<svg style="left:516px;top:864px" width="32" height="32" viewBox="0 0 32 32"><path d="M8 2l22 4-6 24L2 25z" fill="#bfe3ef" stroke="#6f9fb2" stroke-width="1.500"/><path d="M8 2l22 4-1 3-22-4z" fill="#7f99a8"/></svg>

<svg style="left:1209px;top:870px" width="17" height="15"><path d="M1 6h15v8H1z" fill="#e0ded8" stroke="#85837d"/><path d="M3 8h11M3 10h11M5 12h7" stroke="#85837d" stroke-dasharray="1 1"/><path d="M8 6q0-3 6-4" fill="none" stroke="#85837d"/></svg>
<div class="l" style="left:1230px;top:866px;width:1px;height:21px"></div>
<svg style="left:1237px;top:869px" width="16" height="17"><circle cx="8" cy="8.500" r="7.500" fill="#1b3aa0"/><text x="8" y="13" font-size="12" font-weight="bold" fill="#fff" text-anchor="middle" font-family="Liberation Sans">?</text></svg>
<div class="l" style="left:1258px;top:866px;width:1px;height:21px"></div>
<svg style="left:1263px;top:868px" width="10" height="18"><rect x="3" y="1" width="6" height="4" fill="none" stroke="#000"/><rect x="1" y="3" width="6" height="4" fill="#d4d0c8" stroke="#000"/><path d="M1 13h8l-4 4z" fill="#000"/></svg>
<div style="left:1276px;top:860px;width:162px;height:38px;border:1px solid;border-color:#808080 #f8f7f2 #f8f7f2 #808080"></div>
<svg style="left:1281px;top:873px" width="9" height="10"><path d="M1 4l3.500-3L8 4M1 9l3.500-3L8 9" fill="none" stroke="#000" stroke-width="1.300"/></svg>
<svg style="left:1299px;top:870px" width="17" height="17"><rect x="3" y="1" width="12" height="14" fill="#d4d0c8" stroke="#444"/><path d="M1 1v10h4V1" fill="none" stroke="#444"/><path d="M11 9l5 7H6z" fill="#f5d60b" stroke="#8a7a00" stroke-width=".5"/></svg>
<svg style="left:1323px;top:870px" width="17" height="17"><path d="M1 6h4l4-4v12l-4-4H1z" fill="#e4e4e4" stroke="#777"/><circle cx="12" cy="11" r="4.500" fill="#e22"/><path d="M10 9l4 4M14 9l-4 4" stroke="#fff"/></svg>
<div class="a" style="left:1368px;top:861px">11:43</div>
<div class="a" style="left:1352px;top:876px;letter-spacing:-.2px">2019-09-06</div>
<svg style="left:1420px;top:873px" width="16" height="13"><rect width="15" height="12" fill="#1f78c4"/><path d="M0 8h15v4H0z" fill="#103a7a"/></svg>
</body></html>
